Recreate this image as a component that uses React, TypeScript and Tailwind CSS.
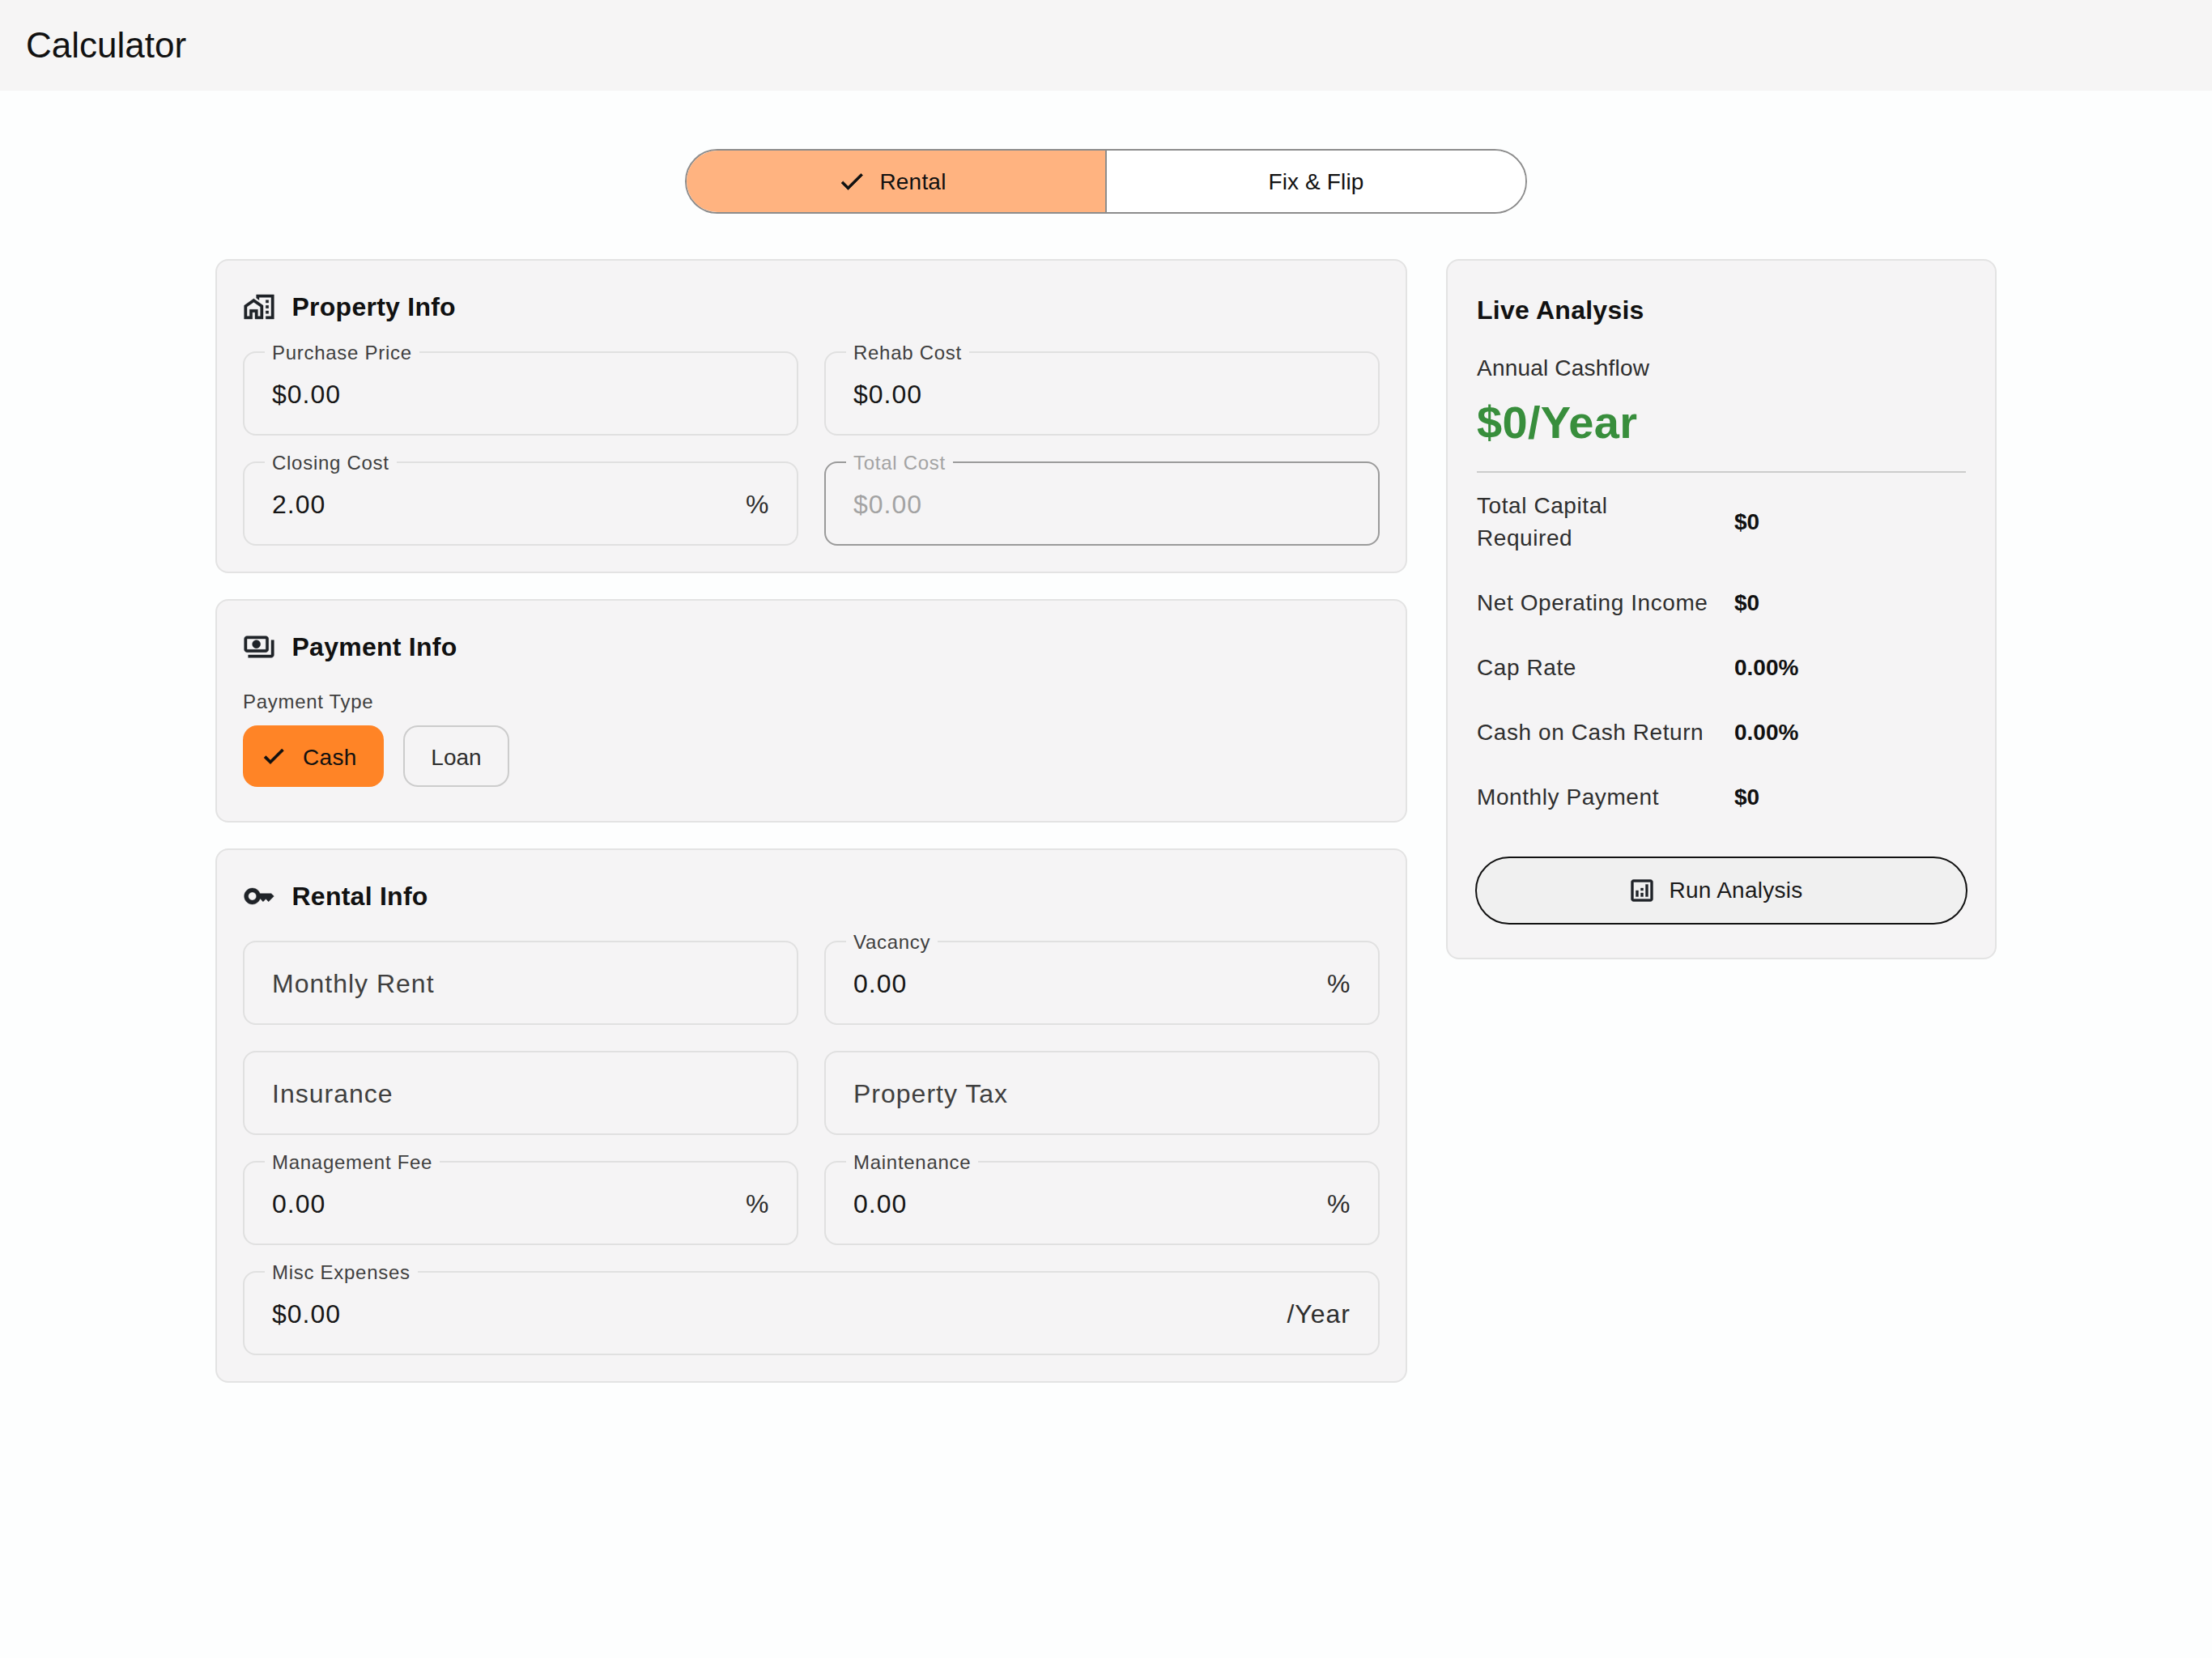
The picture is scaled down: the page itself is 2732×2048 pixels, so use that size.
import React from "react";

function Glyph({ d, size, weight = 0.25, className }: { d: string; size: number; weight?: number; className?: string }) {
  return (
    <svg width={size} height={size} viewBox="0 0 24 24" fill="currentColor" stroke="currentColor" strokeWidth={weight} className={className} aria-hidden="true">
      <path d={d} />
    </svg>
  );
}

const homeWork = "M17 7h2v2h-2zM17 11h2v2h-2zM17 15h2v2h-2zM1 11v10h6v-5h2v5h6V11L8 6l-7 5zm12 8h-2v-5H5v5H3v-7l5-3.5 5 3.5v7zM10 3v2.51l2 1.43V5h9v14h-4v2h6V3z";
const payments = "M19 14V6c0-1.1-.9-2-2-2H3c-1.1 0-2 .9-2 2v8c0 1.1.9 2 2 2h14c1.1 0 2-.9 2-2zm-2 0H3V6h14v8zm-7-7c-1.66 0-3 1.34-3 3s1.34 3 3 3 3-1.34 3-3-1.34-3-3-3zm13 0v11c0 1.1-.9 2-2 2H4v-2h17V7h2z";
const key = "M21 10h-8.35C11.83 7.67 9.61 6 7 6c-3.31 0-6 2.69-6 6s2.69 6 6 6c2.61 0 4.83-1.67 5.65-4H13l2 2 2-2 2 2 4-4.04L21 10zM7 15c-1.65 0-3-1.35-3-3s1.35-3 3-3 3 1.35 3 3-1.35 3-3 3z";
const analytics = "M19 3H5c-1.1 0-2 .9-2 2v14c0 1.1.9 2 2 2h14c1.1 0 2-.9 2-2V5c0-1.1-.9-2-2-2zm0 16H5V5h14v14zM7 12h2v5H7zM15 7h2v10h-2zM11 14h2v3h-2zM11 10h2v2h-2z";
const check = "M9 16.17 4.83 12l-1.42 1.41L9 19 21 7l-1.41-1.41z";

function Field({ label, value, placeholder, suffix, disabled, wide }: { label?: string; value?: string; placeholder?: string; suffix?: string; disabled?: boolean; wide?: boolean }) {
  return (
    <div className={`relative flex h-[104px] items-center justify-between rounded-[16px] border-2 px-[34px] pt-[2px] text-[32px] leading-[40px] tracking-[1px] ${disabled ? "border-[#9a9a9a]" : "border-[#e0e0e0]"} ${wide ? "col-span-2" : ""}`}>
      {label && (
        <span className={`absolute left-[25px] top-[-14px] bg-[#f5f4f5] px-[9px] text-[24px] leading-[28px] tracking-[0.72px] ${disabled ? "text-[#a3a3a3]" : "text-[#3f3f3f]"}`}>
          {label}
        </span>
      )}
      <span className={disabled ? "text-[#a3a3a3]" : placeholder ? "text-[#3f3f3f]" : "text-[#161616]"}>{value ?? placeholder}</span>
      {suffix && <span className={suffix === "%" ? "text-[#2e2e2e] tracking-[0.5px]" : "text-[#2e2e2e]"}>{suffix}</span>}
    </div>
  );
}

function Card({ icon, title, children, extra }: { icon: string; title: string; children: React.ReactNode; extra?: string }) {
  return (
    <section className={`rounded-[16px] border-2 border-[#e3e3e3] bg-[#f5f4f5] p-[32px] ${extra ?? ""}`}>
      <div className="flex h-[50px] items-center gap-[20.5px]">
        <Glyph d={icon} size={40} className="text-[#1f2328]" />
        <h2 className="text-[32px] font-bold leading-[40px] tracking-[0.25px] text-[#111111]">{title}</h2>
      </div>
      {children}
    </section>
  );
}

const metrics: [string, string][] = [
  ["Total Capital Required", "$0"],
  ["Net Operating Income", "$0"],
  ["Cap Rate", "0.00%"],
  ["Cash on Cash Return", "0.00%"],
  ["Monthly Payment", "$0"],
];

export default function App() {
  return (
    <div className="min-h-[2048px] bg-[#fdfefe] font-['Liberation_Sans',Arial,sans-serif] text-[#111111]">
      <header className="flex h-[112px] items-center bg-[#f6f5f5] pl-[32px]">
        <h1 className="text-[44px] font-normal leading-[56px] text-[#111111]">Calculator</h1>
      </header>

      <main className="mx-auto w-[2200px] pt-[72px]">
        <div className="mx-auto flex h-[80px] w-[1040px] overflow-hidden rounded-full border-2 border-[#8c8c8c] text-[28px] leading-[36px]">
          <div className="flex w-[519px] items-center justify-center gap-[16px] border-r-2 border-[#8c8c8c] bg-[#ffb380] pr-[10px]">
            <Glyph d={check} size={36} weight={0.5} className="text-[#111111]" />
            <span className="pt-[1px] tracking-[0.2px]">Rental</span>
          </div>
          <div className="flex flex-1 items-center justify-center bg-white pt-[1px] tracking-[0.15px]">Fix &amp; Flip</div>
        </div>

        <div className="mt-[56px] flex items-start gap-[48px]">
          <div className="flex w-[1472px] flex-col gap-[32px]">
            <Card icon={homeWork} title="Property Info">
              <div className="mt-[30px] grid grid-cols-2 gap-[32px]">
                <Field label="Purchase Price" value="$0.00" />
                <Field label="Rehab Cost" value="$0.00" />
                <Field label="Closing Cost" value="2.00" suffix="%" />
                <Field label="Total Cost" value="$0.00" disabled />
              </div>
            </Card>

            <Card icon={payments} title="Payment Info" extra="pb-[42px]">
              <p className="mt-[29px] text-[24px] leading-[28px] tracking-[0.7px] text-[#3f3f3f]">Payment Type</p>
              <div className="mt-[15px] flex gap-[24px] text-[28px] leading-[36px]">
                <div className="flex h-[76px] w-[174px] items-center gap-[20px] rounded-[18px] bg-[#ff8426] pl-[22px]">
                  <Glyph d={check} size={32} weight={0.8} />
                  <span className="pt-[3px] tracking-[0.3px]">Cash</span>
                </div>
                <div className="flex h-[76px] w-[131px] items-center justify-center rounded-[18px] border-2 border-[#cccccc] pt-[3px] text-[#2e2e2e]">Loan</div>
              </div>
            </Card>

            <Card icon={key} title="Rental Info">
              <div className="mt-[30px] grid grid-cols-2 gap-[32px]">
                <Field placeholder="Monthly Rent" />
                <Field label="Vacancy" value="0.00" suffix="%" />
                <Field placeholder="Insurance" />
                <Field placeholder="Property Tax" />
                <Field label="Management Fee" value="0.00" suffix="%" />
                <Field label="Maintenance" value="0.00" suffix="%" />
                <Field label="Misc Expenses" value="$0.00" suffix="/Year" wide />
              </div>
            </Card>
          </div>

          <aside className="w-[680px] rounded-[16px] border-2 border-[#e3e3e3] bg-[#f5f4f5] px-[36px] pb-[41px] pt-[40px]">
            <h2 className="text-[32px] font-bold leading-[42px] tracking-[0.25px] text-[#111111]">Live Analysis</h2>
            <p className="mt-[31px] text-[28px] leading-[40px] tracking-[0.2px] text-[#2e2e2e]">Annual Cashflow</p>
            <p className="mt-[15px] text-[56px] font-bold leading-[64px] tracking-[0.3px] text-[#388e3c]">$0/Year</p>
            <div className="mt-[28px] h-[2px] bg-[#cccccc]" />
            <dl className="mt-[21px] grid grid-cols-[318px_1fr] items-center gap-y-[40px] text-[28px] leading-[40px]">
              {metrics.map(([k, v]) => (
                <React.Fragment key={k}>
                  <dt className="pr-[32px] tracking-[0.58px] text-[#2e2e2e]">{k}</dt>
                  <dd className="font-bold text-[#111111]">{v}</dd>
                </React.Fragment>
              ))}
            </dl>
            <button className="mx-[-2px] mt-[53px] flex h-[84px] w-[608px] items-center justify-center gap-[15px] rounded-full border-2 border-[#111111] bg-[#f0f0f0] pr-[16px] text-[28px] leading-[36px] text-[#1a1a1a]">
              <Glyph d={analytics} size={36} className="text-[#1f2328]" />
              <span className="pl-[1px] tracking-[0.25px]">Run Analysis</span>
            </button>
          </aside>
        </div>
      </main>
    </div>
  );
}
